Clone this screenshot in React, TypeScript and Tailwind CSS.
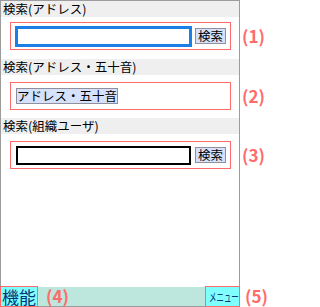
import React from "react";

const font = { fontFamily: '"Noto Sans CJK JP", "Noto Sans", sans-serif' };

function SectionHeader({ title }: { title: string }) {
  return (
    <div className="h-[16px] bg-[#efefef] pl-[2px] text-[12.5px] leading-[16px] text-black">
      {title}
    </div>
  );
}

function SearchButton({ label }: { label: string }) {
  return (
    <button className="h-[16px] border border-[#8f8f9d] bg-[#d6e2fb] px-[2px] text-[12.5px] leading-[14px] text-black">
      {label}
    </button>
  );
}

function Note({ n, className }: { n: number; className: string }) {
  return (
    <span className={`absolute text-[17px] font-bold leading-[20px] text-[#ff6b6b] ${className}`}>
      ({n})
    </span>
  );
}

export default function App() {
  return (
    <div className="relative h-[307px] w-[270px] overflow-hidden bg-white" style={font}>
      <div className="flex h-[307px] w-[240px] flex-col border border-[#9c9c9c]">
        <SectionHeader title="検索(アドレス)" />
        <div className="ml-[9px] mt-[5px] flex h-[28px] w-[221px] items-center gap-[4px] border border-[#ff6b6b] pl-[5px]">
          <input
            readOnly
            className="h-[19px] w-[175px] border-2 border-[#1b7fe6] outline-none ring-1 ring-[#1b7fe6]"
          />
          <SearchButton label="検索" />
        </div>

        <div className="mt-[9px]">
          <SectionHeader title="検索(アドレス・五十音)" />
        </div>
        <div className="ml-[9px] mt-[7px] flex h-[28px] w-[221px] items-center border border-[#ff6b6b] pl-[5px]">
          <button className="h-[16px] w-[102px] border border-[#8f8f9d] bg-[#d6e2fb] text-[12.5px] leading-[14px] text-black">
            アドレス・五十音
          </button>
        </div>

        <div className="mt-[8px]">
          <SectionHeader title="検索(組織ユーザ)" />
        </div>
        <div className="ml-[9px] mt-[7px] flex h-[28px] w-[221px] items-center gap-[4px] border border-[#ff6b6b] pl-[5px]">
          <input readOnly className="h-[19px] w-[175px] border-2 border-black outline-none" />
          <SearchButton label="検索" />
        </div>

        <div className="mt-auto flex h-[19px] items-stretch justify-between bg-[#bde6dd]">
          <span className="flex w-[36px] items-center justify-center bg-[#80ffff] text-[17px] leading-none text-[#06357a] outline outline-1 outline-[#ff6b6b]">
            機能
          </span>
          <span className="flex w-[33px] items-center overflow-hidden bg-[#80ffff] outline outline-1 outline-[#ff6b6b]">
            <span className="ml-[3px] inline-block origin-left scale-x-[0.62] whitespace-nowrap text-[12px] leading-none text-[#06357a]">
              メニュー
            </span>
          </span>
        </div>
      </div>

      <Note n={1} className="left-[242px] top-[26px]" />
      <Note n={2} className="left-[242px] top-[86px]" />
      <Note n={3} className="left-[242px] top-[145px]" />
      <Note n={4} className="left-[46px] top-[286px]" />
      <Note n={5} className="left-[245px] top-[286px]" />
    </div>
  );
}
